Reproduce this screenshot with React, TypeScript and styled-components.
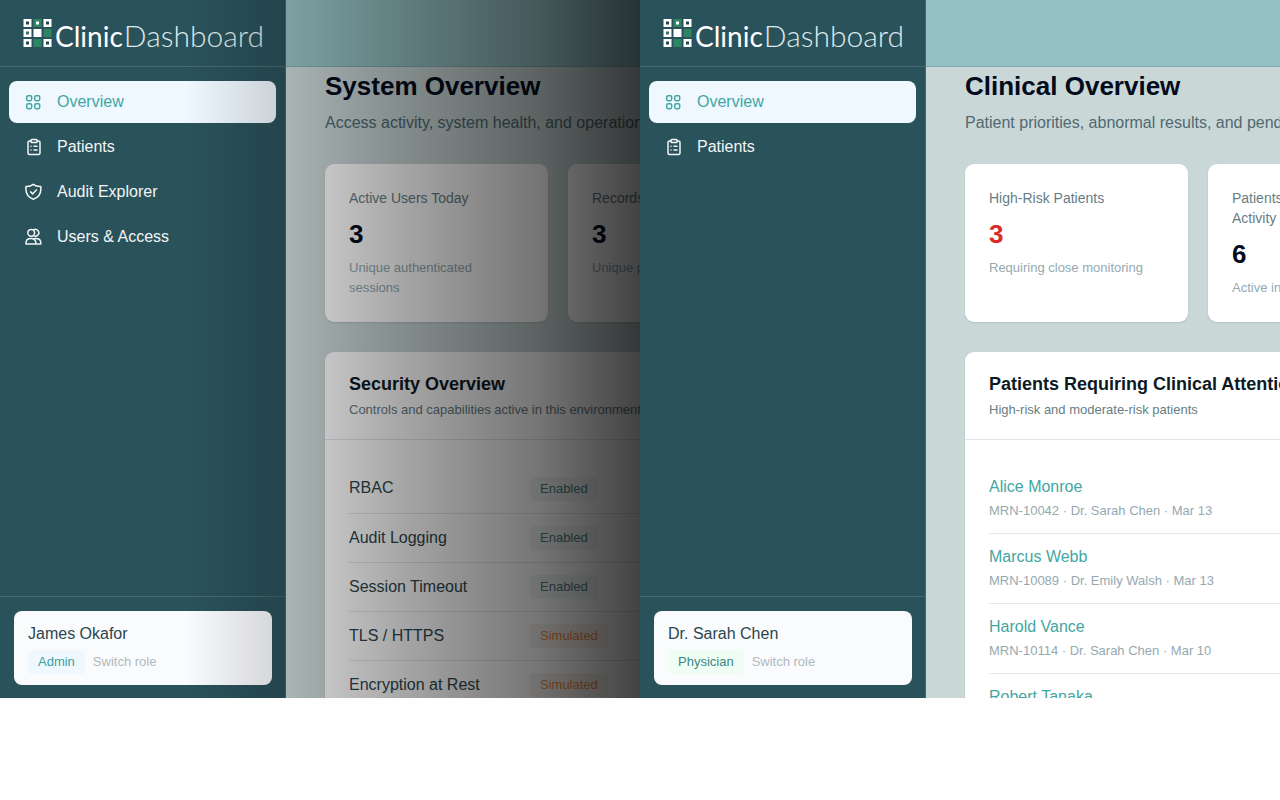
import React from "react";
import styled, { createGlobalStyle } from "styled-components";
import { ClipboardList } from "lucide-react";

const GlobalStyle = createGlobalStyle`
  *, *::before, *::after { box-sizing: border-box; }
  body { margin: 0; background: #fefefe; font-family: "Liberation Sans", Arial, sans-serif; font-size: 16px; line-height: 24px; color: #2c454d; }
  h1, h2, p, ul { margin: 0; padding: 0; }
  ul { list-style: none; }
`;

const Page = styled.div`
  display: grid;
  grid-template-columns: repeat(2, minmax(0, 1fr));
  height: 100vh;
  padding-bottom: 102px;
`;

const Screen = styled.section`
  position: relative;
  display: flex;
  min-width: 0;
  min-height: 0;
  overflow: hidden;
  background: #cad7d7;
`;

const Shade = styled.div`
  position: absolute;
  inset: 0;
  pointer-events: none;
  background: linear-gradient(
    to right,
    rgba(0, 0, 0, 0) 29%,
    rgba(0, 0, 0, 0.17) 45%,
    rgba(0, 0, 0, 0.34) 62%,
    rgba(0, 0, 0, 0.54) 84%,
    rgba(0, 0, 0, 0.74) 100%
  );
`;

const Sidebar = styled.aside`
  flex: none;
  display: flex;
  flex-direction: column;
  width: 286px;
  background: #2a525b;
  border-right: 1px solid #426870;
`;

const Brand = styled.div`
  display: flex;
  align-items: center;
  gap: 3px;
  height: 67px;
  padding: 0 0 0 23px;
  border-bottom: 1px solid #47686f;
`;

const BrandName = styled.span`
  padding-top: 4px;
  font-family: Lato, "Liberation Sans", sans-serif;
  font-size: 28px;
  line-height: 36px;
  font-weight: 400;
  color: #fff;
  white-space: nowrap;
`;

const BrandLight = styled.span`
  margin-left: 1px;
  font-size: 30px;
  font-weight: 300;
  color: #dfe8ea;
`;

const Nav = styled.nav`
  flex: 1;
  display: flex;
  flex-direction: column;
  gap: 3px;
  padding: 14px 9px;
`;

const NavLink = styled.a<{ $active?: boolean }>`
  display: flex;
  align-items: center;
  gap: 14px;
  height: 42px;
  padding: 0 16px;
  border-radius: 8px;
  text-decoration: none;
  color: ${(p) => (p.$active ? "#43a6a3" : "#f1f6f7")};
  background: ${(p) => (p.$active ? "#eff8ff" : "transparent")};
`;

const Account = styled.div`
  padding: 14px 13px 13px 14px;
  border-top: 1px solid #47686f;
`;

const AccountCard = styled.div`
  height: 74px;
  padding: 11px 14px;
  border-radius: 8px;
  background: #fafbfd;
`;

const RoleLine = styled.div`
  display: flex;
  align-items: center;
  gap: 8px;
  margin-top: 4px;
`;

const Role = styled.span<{ $tone: "blue" | "green" }>`
  padding: 1px 10px;
  border-radius: 4px;
  font-size: 13px;
  line-height: 22px;
  color: ${(p) => (p.$tone === "blue" ? "#3ba19b" : "#3a8784")};
  background: ${(p) => (p.$tone === "blue" ? "#eff8ff" : "#effdf5")};
`;

const SwitchRole = styled.button`
  padding: 0;
  border: 0;
  background: none;
  font: inherit;
  font-size: 13px;
  color: #b0b9bd;
`;

const Main = styled.main`
  flex: 1;
  min-width: 0;
  overflow: hidden;
`;

const TopBar = styled.header`
  height: 67px;
  background: #95c1c4;
  border-bottom: 1px solid #7fadb1;
`;

const Content = styled.div`
  width: 100%;
  min-width: 1030px;
  padding: 3px 39px 0;
`;

const Title = styled.h1`
  font-size: 26px;
  line-height: 32px;
  font-weight: 700;
  color: #020a1c;
`;

const Subtitle = styled.p`
  margin: 9px 0 29px;
  color: #4f6a72;
`;

const Stats = styled.div`
  display: grid;
  grid-template-columns: repeat(4, 1fr);
  gap: 20px;
  margin-bottom: 30px;
`;

const Card = styled.div`
  border-radius: 9px;
  background: #fff;
  box-shadow: 0 1px 2px rgba(30, 60, 70, 0.14);
`;

const StatCard = styled(Card)`
  min-height: 158px;
  padding: 24px;
`;

const SmallText = styled.p`
  font-size: 13px;
  line-height: 20px;
  color: #667d85;
`;

const StatLabel = styled(SmallText)`
  font-size: 14px;
`;

const StatValue = styled.p<{ $alert?: boolean }>`
  margin: 8px 0 6px;
  font-size: 26px;
  line-height: 36px;
  font-weight: 700;
  color: ${(p) => (p.$alert ? "#d92b2b" : "#020a1c")};
`;

const MutedText = styled(SmallText)`
  color: #95a9b1;
`;

const PanelHead = styled.div`
  padding: 20px 24px 19px;
  border-bottom: 1px solid #dde6e8;
`;

const PanelTitle = styled.h2`
  margin-bottom: 4px;
  font-size: 18px;
  line-height: 24px;
  font-weight: 700;
  color: #0c1a24;
`;

const PanelBody = styled.div`
  padding: 24px;
`;

const Controls = styled.table`
  width: 100%;
  border-collapse: collapse;

  th, td {
    height: 49px;
    padding: 0;
    border-bottom: 1px solid #dfe8ea;
    text-align: left;
    font-weight: 400;
  }
  th { width: 181px; }
`;

const Status = styled.span<{ $simulated?: boolean }>`
  display: inline-block;
  padding: 2px 10px;
  border-radius: 4px;
  font-size: 13px;
  line-height: 20px;
  color: ${(p) => (p.$simulated ? "#f58b3a" : "#4c7d80")};
  background: ${(p) => (p.$simulated ? "#f6f3ef" : "#f2f7f6")};
`;

const Patient = styled.li`
  padding: 11px 0 12px;
  border-bottom: 1px solid #e3ebed;
`;

const PatientLink = styled.a`
  display: block;
  margin-bottom: 2px;
  color: #43a6a3;
  text-decoration: none;
`;

const iconProps = { width: 18, height: 18, viewBox: "0 0 18 18", fill: "none", stroke: "currentColor", strokeWidth: 1.5 };

const OverviewIcon = () => (
  <svg {...iconProps}>
    <rect x="1.7" y="2.7" width="5" height="5" rx="1.4" />
    <rect x="9.7" y="2.7" width="5" height="5" rx="1.4" />
    <rect x="1.7" y="10.7" width="5" height="5" rx="1.4" />
    <rect x="9.7" y="10.7" width="5" height="5" rx="1.4" />
  </svg>
);

const ShieldIcon = () => (
  <svg {...iconProps}>
    <path d="M8.3 1.3C10.4 3 13 3.7 15.8 3.5C16.4 9.6 14 14.4 8.3 16.2C2.6 14.4 0.4 9.6 1 3.5C3.6 3.7 6.2 3 8.3 1.3Z" strokeLinejoin="round" />
    <path d="M5.6 8.9L7.6 10.9L11.3 6.9" strokeLinecap="round" />
  </svg>
);

const PeopleIcon = () => (
  <svg {...iconProps}>
    <circle cx="6.2" cy="4.8" r="3.4" />
    <path d="M8.3 2.1A3.4 3.4 0 1 1 8.3 7.5" />
    <path d="M1 16V14.8C1 12.2 3 10.4 5.9 10.4C8.8 10.4 10.8 12.2 10.8 14.8V16Z" strokeLinejoin="round" />
    <path d="M8.9 10.9C9.5 10.5 10.2 10.4 10.9 10.4C13.8 10.4 15.8 12.2 15.8 14.8V16H10.8" strokeLinejoin="round" />
  </svg>
);

const Mark = () => (
  <svg width="29" height="28" viewBox="0 0 29 28" aria-hidden="true">
    {[0, 1, 2].map((row) =>
      [0, 1, 2].map((col) => {
        const green = (row === 0 && col === 1) || (row === 1 && col === 2) || (row === 2 && col === 1);
        const solid = (row === 1 && col >= 1) || (row === 2 && col === 1);
        const x = col * 10 + 0.5;
        const y = row * 10;
        return (
          <g key={`${row}${col}`}>
            <rect x={x} y={y} width="8" height="8" fill={green ? "#2f8464" : "#fff"} />
            {!solid && (
              <rect x={x + 2.5} y={y + 2.5} width="3" height="3" fill={green ? "#fff" : row === 1 ? "#2f7868" : "#23454f"} />
            )}
          </g>
        );
      }),
    )}
  </svg>
);

const navItems = [
  { label: "Overview", icon: <OverviewIcon /> },
  { label: "Patients", icon: <ClipboardList size={18} strokeWidth={2} /> },
  { label: "Audit Explorer", icon: <ShieldIcon /> },
  { label: "Users & Access", icon: <PeopleIcon /> },
];

const controls = [
  { name: "RBAC", simulated: false },
  { name: "Audit Logging", simulated: false },
  { name: "Session Timeout", simulated: false },
  { name: "TLS / HTTPS", simulated: true },
  { name: "Encryption at Rest", simulated: true },
];

const patients = [
  { name: "Alice Monroe", meta: "MRN-10042 · Dr. Sarah Chen · Mar 13" },
  { name: "Marcus Webb", meta: "MRN-10089 · Dr. Emily Walsh · Mar 13" },
  { name: "Harold Vance", meta: "MRN-10114 · Dr. Sarah Chen · Mar 10" },
  { name: "Robert Tanaka", meta: "" },
];

interface Stat {
  label: React.ReactNode;
  value: number;
  note: string;
  alert?: boolean;
}

interface DashboardProps {
  user: string;
  role: string;
  tone: "blue" | "green";
  navCount: number;
  title: string;
  subtitle: string;
  stats: Stat[];
  panelTitle: string;
  panelNote: string;
  shaded?: boolean;
  children: React.ReactNode;
}

const Dashboard = (p: DashboardProps) => (
  <Screen>
    <Sidebar>
      <Brand>
        <Mark />
        <BrandName>
          Clinic<BrandLight>Dashboard</BrandLight>
        </BrandName>
      </Brand>
      <Nav>
        {navItems.slice(0, p.navCount).map((item, i) => (
          <NavLink key={item.label} href="#" $active={i === 0}>
            {item.icon}
            {item.label}
          </NavLink>
        ))}
      </Nav>
      <Account>
        <AccountCard>
          <p>{p.user}</p>
          <RoleLine>
            <Role $tone={p.tone}>{p.role}</Role>
            <SwitchRole type="button">Switch role</SwitchRole>
          </RoleLine>
        </AccountCard>
      </Account>
    </Sidebar>
    <Main>
      <TopBar />
      <Content>
        <Title>{p.title}</Title>
        <Subtitle>{p.subtitle}</Subtitle>
        <Stats>
          {p.stats.map((s, i) => (
            <StatCard key={i}>
              <StatLabel>{s.label}</StatLabel>
              <StatValue $alert={s.alert}>{s.value}</StatValue>
              <MutedText>{s.note}</MutedText>
            </StatCard>
          ))}
        </Stats>
        <Card>
          <PanelHead>
            <PanelTitle>{p.panelTitle}</PanelTitle>
            <SmallText>{p.panelNote}</SmallText>
          </PanelHead>
          <PanelBody>{p.children}</PanelBody>
        </Card>
      </Content>
    </Main>
    {p.shaded && <Shade />}
  </Screen>
);

export default function App() {
  return (
    <>
      <GlobalStyle />
      <Page>
        <Dashboard
          user="James Okafor"
          role="Admin"
          tone="blue"
          navCount={4}
          title="System Overview"
          subtitle="Access activity, system health, and operational"
          stats={[
            { label: "Active Users Today", value: 3, note: "Unique authenticated sessions" },
            { label: "Records", value: 3, note: "Unique patients" },
          ]}
          panelTitle="Security Overview"
          panelNote="Controls and capabilities active in this environment"
          shaded
        >
          <Controls>
            <tbody>
              {controls.map((c) => (
                <tr key={c.name}>
                  <th scope="row">{c.name}</th>
                  <td>
                    <Status $simulated={c.simulated}>{c.simulated ? "Simulated" : "Enabled"}</Status>
                  </td>
                </tr>
              ))}
            </tbody>
          </Controls>
        </Dashboard>
        <Dashboard
          user="Dr. Sarah Chen"
          role="Physician"
          tone="green"
          navCount={2}
          title="Clinical Overview"
          subtitle="Patient priorities, abnormal results, and pending"
          stats={[
            { label: "High-Risk Patients", value: 3, note: "Requiring close monitoring", alert: true },
            { label: <>Patients<br />Activity</>, value: 6, note: "Active in" },
          ]}
          panelTitle="Patients Requiring Clinical Attention"
          panelNote="High-risk and moderate-risk patients"
        >
          <ul>
            {patients.map((x) => (
              <Patient key={x.name}>
                <PatientLink href="#">{x.name}</PatientLink>
                <MutedText>{x.meta}</MutedText>
              </Patient>
            ))}
          </ul>
        </Dashboard>
      </Page>
    </>
  );
}
